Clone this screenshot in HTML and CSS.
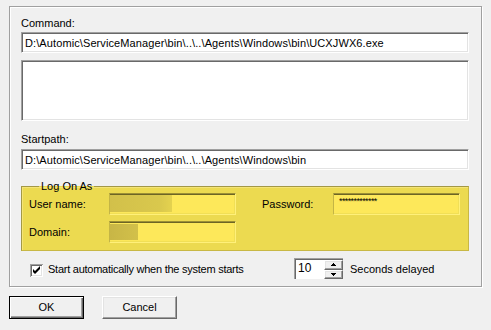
FILE: index.html
```html
<!DOCTYPE html>
<html lang="en">
<head>
	<meta charset="UTF-8">
	<title>Service Properties</title>
	<link rel="stylesheet" href="styles.css">
</head>
<body>

<div class="frame">
	<div class="label first">Command:</div>
	<div class="field">D:\Automic\ServiceManager\bin\..\..\Agents\Windows\bin\UCXJWX6.exe</div>
	<div class="memo"></div>

	<div class="label second">Startpath:</div>
	<div class="field">D:\Automic\ServiceManager\bin\..\..\Agents\Windows\bin</div>

	<fieldset class="logon">
		<legend>Log On As</legend>
		<div class="logon-grid">
			<span class="logon-label">User name:</span>
			<div class="yfield"><span class="blur blur-user"></span></div>
			<span class="logon-label pw-label">Password:</span>
			<div class="yfield pw">*************</div>
			<span class="logon-label">Domain:</span>
			<div class="yfield"><span class="blur blur-domain"></span></div>
		</div>
	</fieldset>

	<div class="options">
		<div class="check">
			<svg class="check-box" width="13" height="13" viewBox="0 0 13 13">
				<rect x="0" y="0" width="13" height="13" fill="#a0a0a0"/>
				<rect x="1" y="1" width="12" height="12" fill="#fff"/>
				<rect x="1" y="1" width="11" height="11" fill="#696969"/>
				<rect x="2" y="2" width="10" height="10" fill="#e3e3e3"/>
				<rect x="2" y="2" width="9" height="9" fill="#fff"/>
				<path d="M3 5 L3 8 L5 10 L10 5 L10 2 L5 7 Z" fill="#000"/>
			</svg>
			<span>Start automatically when the system starts</span>
		</div>
		<div class="spin">
			<div class="spin-edit">10</div>
			<div class="spin-buttons">
				<div class="spin-btn"><svg width="5" height="3" viewBox="0 0 5 3"><path d="M2 0h1v1h1v1h1v1H0V2h1V1h1z" fill="#000"/></svg></div>
				<div class="spin-btn"><svg width="5" height="3" viewBox="0 0 5 3"><path d="M0 0h5v1H4v1H3v1H2V2H1V1H0z" fill="#000"/></svg></div>
			</div>
		</div>
		<span class="spin-label">Seconds delayed</span>
	</div>
</div>

<div class="buttons">
	<button class="btn btn-default">OK</button>
	<button class="btn">Cancel</button>
</div>

</body>
</html>
```

FILE: styles.css
```css
html {
	font-family: "Liberation Sans", Arial, sans-serif;
	font-size: 11px;
	line-height: 13px;
	color: #000;
}
body {
	margin: 0;
	background: #f0f0f0;
	width: 491px;
	height: 330px;
	overflow: hidden;
}

.frame {
	margin: 6px 0 0 9px;
	width: 473px;
	height: 281px;
	box-sizing: border-box;
	border: 1px solid #a0a0a0;
	box-shadow: inset 1px 1px #fff, 1px 1px #fff;
	padding: 10px 12px 0 11px;
}

.label {
	height: 13px;
}
.label.second {
	margin-top: 12px;
}

/* sunken edit boxes */
.field,
.memo {
	box-sizing: border-box;
	width: 448px;
	background: #fff;
	border-top: 1px solid #a0a0a0;
	border-left: 1px solid #a0a0a0;
	border-right: 1px solid #fff;
	border-bottom: 1px solid #fff;
	box-shadow: inset 1px 1px #696969, inset -1px -1px #e3e3e3;
}
.field {
	height: 21px;
	margin-top: 2px;
	padding: 4px 0 0 3px;
	white-space: nowrap;
	letter-spacing: 0.1px;
}
.label.second + .field {
	margin-top: 3px;
}
.memo {
	height: 61px;
	margin-top: 7px;
}

/* Log On As group */
.logon {
	margin: 10px 0 0 0;
	width: 448px;
	box-sizing: border-box;
	padding: 0 8px 7px 7px;
	background: #ecda50;
	border: 1px solid #a39845;
	border-right-color: #c8b845;
	border-bottom-color: #c8b845;
	box-shadow: inset 1px 1px #f4e477;
	min-width: 0;
}
.logon legend {
	margin-left: 10px;
	padding: 0 2px;
	height: 13px;
	line-height: 13px;
}
.logon-grid {
	display: grid;
	grid-template-columns: 80px 127px 97px 127px;
	grid-auto-rows: 22px;
	row-gap: 6px;
	align-items: center;
}
.pw-label {
	padding-left: 26px;
}
.yfield {
	box-sizing: border-box;
	height: 22px;
	background: #fde85a;
	border-top: 1px solid #9c9036;
	border-left: 1px solid #c4b545;
	border-right: 1px solid #fff07a;
	border-bottom: 1px solid #fff07a;
	box-shadow: inset 0 1px #6d6524, inset -1px -1px #f1df56;
	position: relative;
}
.yfield.pw {
	font-size: 9px;
	line-height: 9px;
	letter-spacing: -0.6px;
	padding: 3px 0 0 5px;
}
.blur {
	position: absolute;
	left: 0;
	top: 1px;
	background: linear-gradient(90deg, #d2c04a, #d9c84d 80%, #e4d24f);
	filter: blur(0.6px);
}
.blur-user {
	width: 62px;
	height: 17px;
}
.blur-domain {
	width: 28px;
	top: 2px;
	height: 16px;
	background: linear-gradient(90deg, #c8b646, #d2c04a);
}

/* checkbox + spinner row */
.options {
	display: flex;
	align-items: center;
	margin-top: 7px;
	height: 21px;
}
.check {
	display: flex;
	align-items: center;
	width: 273px;
	padding-left: 9px;
	box-sizing: border-box;
}
.check-box {
	display: block;
	margin-right: 5px;
	margin-top: 4px;
}
.check span {
	margin-top: 1px;
	letter-spacing: -0.25px;
}
.spin {
	display: flex;
	width: 49px;
	height: 21px;
	box-sizing: border-box;
	background: #fff;
	border-top: 1px solid #a0a0a0;
	border-left: 1px solid #a0a0a0;
	box-shadow: inset 1px 1px #696969;
}
.spin-edit {
	flex: 1;
	padding: 3px 0 0 3px;
	font-size: 12px;
}
.spin-buttons {
	display: flex;
	flex-direction: column;
	width: 19px;
	padding-top: 1px;
}
.spin-btn {
	flex: 1;
	display: flex;
	align-items: center;
	justify-content: center;
	background: #f0f0f0;
	border-top: 1px solid #fff;
	border-left: 1px solid #fff;
	border-right: 1px solid #696969;
	border-bottom: 1px solid #696969;
	box-shadow: inset -1px -1px #a0a0a0, inset 1px 1px #e3e3e3;
}
.spin-label {
	margin-left: 7px;
	margin-top: 1px;
}

/* dialog buttons */
.buttons {
	display: flex;
	gap: 18px;
	margin: 9px 0 0 9px;
}
.btn {
	width: 75px;
	height: 23px;
	box-sizing: border-box;
	font: inherit;
	color: #000;
	background: #f0f0f0;
	padding: 0;
	border-top: 1px solid #fff;
	border-left: 1px solid #fff;
	border-right: 1px solid #696969;
	border-bottom: 1px solid #696969;
	box-shadow: inset -1px -1px #a0a0a0, inset 1px 1px #e3e3e3;
}
.btn-default {
	border: 1px solid #000;
	box-shadow: inset 1px 1px #fff, inset -1px -1px #696969, inset -2px -2px #a0a0a0;
}
```
